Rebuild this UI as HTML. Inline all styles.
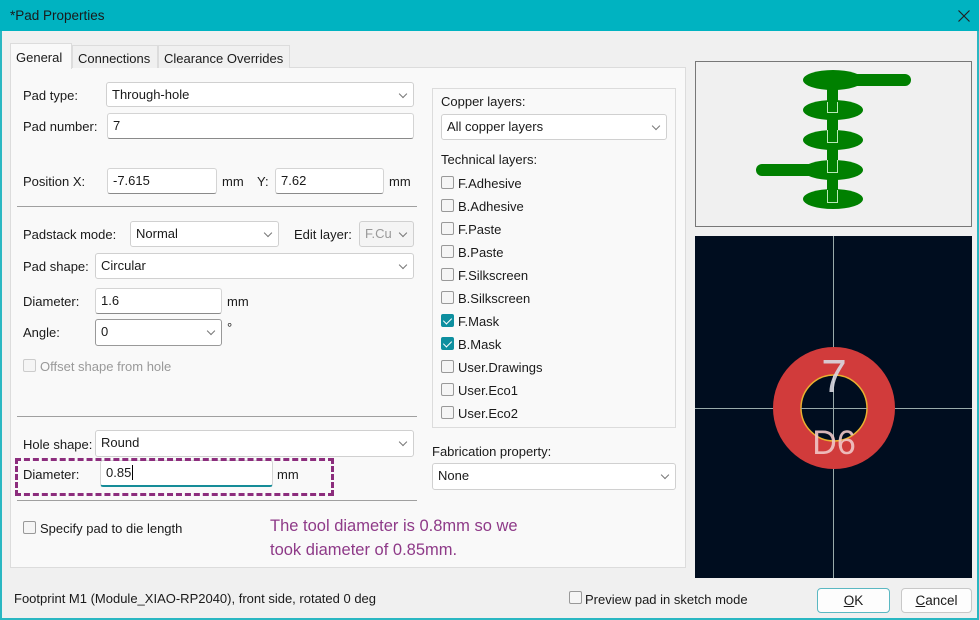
<!DOCTYPE html>
<html><head><meta charset="utf-8"><style>
*{box-sizing:border-box;margin:0;padding:0}
body{width:979px;height:620px;overflow:hidden;background:#f0f0f0;font-family:"Liberation Sans",sans-serif;font-size:13px;color:#1a1a1a;position:relative}
.a{position:absolute;white-space:nowrap}
.tb{left:0;top:0;width:979px;height:31px;background:#00b3c1}
.frame{left:0;top:31px;width:979px;height:589px;border:2px solid #2ab7c2;border-top:none}
.panel{left:10px;top:67px;width:676px;height:501px;background:#f9f9f9;border:1px solid #dcdcdc}
.in{position:absolute;background:#fff;border:1px solid #d4d4d4;border-bottom:1px solid #8a8a8a;border-radius:3px;padding-left:5px;line-height:24px;font-size:13px;white-space:nowrap}
.sel{position:absolute;background:#fff;border:1px solid #d0d0d0;border-radius:3px;padding-left:5px;line-height:24px;font-size:13px;white-space:nowrap}
.sel:after{content:"";position:absolute;right:7px;top:8px;width:5px;height:5px;border-right:1px solid #777;border-bottom:1px solid #777;transform:rotate(45deg)}
.cb{position:absolute;width:13px;height:13px;border:1px solid #999;background:#f5f5f5;border-radius:2px}
.ck{background:#0d8f9f;border-color:#0d8f9f}
.ck:after{content:"";position:absolute;left:3px;top:1px;width:4px;height:7px;border-right:1.5px solid #fff;border-bottom:1.5px solid #fff;transform:rotate(45deg)}
.hr{position:absolute;height:1px;background:#a0a0a0}
.tab{position:absolute;top:45px;height:23px;background:#f0f0f0;border:1px solid #dcdcdc;border-bottom:none;padding:5px 0 0 5px;font-size:13px;white-space:nowrap;overflow:hidden}
.btn{position:absolute;height:25px;background:#fdfdfd;border:1px solid #c8c8c8;border-radius:4px;text-align:center;line-height:23px;font-size:13.5px}
</style></head><body>
<div class="a tb"></div>
<div class="a" style="left:10px;top:8px;color:#1a1a1a;font-size:13.5px">*Pad Properties</div>
<svg class="a" style="left:958px;top:10px" width="12" height="12"><path d="M0.5 0.5L11.5 11.5M11.5 0.5L0.5 11.5" stroke="#222" stroke-width="1.2"/></svg>
<div class="a frame"></div>
<div class="a panel"></div>
<div class="tab" style="left:10px;top:43px;height:26px;width:62px;background:#f9f9f9;padding-top:6px">General</div>
<div class="tab" style="left:72px;width:86px">Connections</div>
<div class="tab" style="left:158px;width:132px">Clearance Overrides</div>

<div class="a" style="left:23px;top:88px">Pad type:</div>
<div class="sel" style="left:106px;top:82px;width:308px;height:25px">Through-hole</div>
<div class="a" style="left:23px;top:119px">Pad number:</div>
<div class="in" style="left:107px;top:113px;width:307px;height:26px">7</div>
<div class="a" style="left:23px;top:174px">Position X:</div>
<div class="in" style="left:107px;top:168px;width:110px;height:26px">-7.615</div>
<div class="a" style="left:222px;top:174px">mm</div>
<div class="a" style="left:257px;top:174px">Y:</div>
<div class="in" style="left:275px;top:168px;width:109px;height:26px">7.62</div>
<div class="a" style="left:389px;top:174px">mm</div>
<div class="hr" style="left:17px;top:206px;width:400px"></div>

<div class="a" style="left:23px;top:227px">Padstack mode:</div>
<div class="sel" style="left:130px;top:221px;width:149px;height:26px">Normal</div>
<div class="a" style="left:294px;top:227px">Edit layer:</div>
<div class="sel" style="left:359px;top:221px;width:55px;height:26px;color:#999;background:#f4f4f4">F.Cu</div>
<div class="a" style="left:23px;top:259px">Pad shape:</div>
<div class="sel" style="left:95px;top:253px;width:319px;height:26px">Circular</div>
<div class="a" style="left:23px;top:294px">Diameter:</div>
<div class="in" style="left:95px;top:288px;width:127px;height:26px">1.6</div>
<div class="a" style="left:227px;top:294px">mm</div>
<div class="a" style="left:23px;top:325px">Angle:</div>
<div class="sel" style="left:95px;top:319px;width:127px;height:27px;border-color:#999">0</div>
<div class="a" style="left:227px;top:320px">°</div>
<div class="cb" style="left:23px;top:359px;border-color:#ccc"></div>
<div class="a" style="left:40px;top:359px;color:#999">Offset shape from hole</div>
<div class="hr" style="left:17px;top:416px;width:400px"></div>

<div class="a" style="left:23px;top:437px">Hole shape:</div>
<div class="sel" style="left:95px;top:430px;width:319px;height:27px">Round</div>
<div class="a" style="left:23px;top:467px">Diameter:</div>
<div class="in" style="left:100px;top:460px;width:173px;height:27px;border-bottom:2px solid #168c98">0.85<span style="border-left:1px solid #000;margin-left:1px"></span></div>
<div class="a" style="left:277px;top:467px">mm</div>
<div class="a" style="left:15px;top:458px;width:319px;height:38px;border:3px dashed #8c2d7d"></div>
<div class="hr" style="left:17px;top:500px;width:400px"></div>
<div class="cb" style="left:23px;top:521px"></div>
<div class="a" style="left:40px;top:521px">Specify pad to die length</div>
<div class="a" style="left:270px;top:514px;color:#8e3a88;font-size:16.5px;line-height:24px">The tool diameter is 0.8mm so we<br>took diameter of 0.85mm.</div>

<div class="a" style="left:432px;top:88px;width:244px;height:340px;border:1px solid #dcdcdc"></div>
<div class="a" style="left:441px;top:94px">Copper layers:</div>
<div class="sel" style="left:441px;top:114px;width:226px;height:26px">All copper layers</div>
<div class="a" style="left:441px;top:152px">Technical layers:</div>
<div class="cb" style="left:441px;top:176px"></div><div class="a" style="left:458px;top:176px">F.Adhesive</div>
<div class="cb" style="left:441px;top:199px"></div><div class="a" style="left:458px;top:199px">B.Adhesive</div>
<div class="cb" style="left:441px;top:222px"></div><div class="a" style="left:458px;top:222px">F.Paste</div>
<div class="cb" style="left:441px;top:245px"></div><div class="a" style="left:458px;top:245px">B.Paste</div>
<div class="cb" style="left:441px;top:268px"></div><div class="a" style="left:458px;top:268px">F.Silkscreen</div>
<div class="cb" style="left:441px;top:291px"></div><div class="a" style="left:458px;top:291px">B.Silkscreen</div>
<div class="cb ck" style="left:441px;top:314px"></div><div class="a" style="left:458px;top:314px">F.Mask</div>
<div class="cb ck" style="left:441px;top:337px"></div><div class="a" style="left:458px;top:337px">B.Mask</div>
<div class="cb" style="left:441px;top:360px"></div><div class="a" style="left:458px;top:360px">User.Drawings</div>
<div class="cb" style="left:441px;top:383px"></div><div class="a" style="left:458px;top:383px">User.Eco1</div>
<div class="cb" style="left:441px;top:406px"></div><div class="a" style="left:458px;top:406px">User.Eco2</div>
<div class="a" style="left:432px;top:444px">Fabrication property:</div>
<div class="sel" style="left:432px;top:463px;width:244px;height:27px">None</div>

<svg class="a" style="left:695px;top:61px" width="277" height="166">
<rect x="0.5" y="0.5" width="276" height="165" fill="#f0f0f0" stroke="#777"/>
<g fill="#008000" transform="translate(-695,-61)">
<rect x="833" y="74" width="78" height="12" rx="6"/>
<rect x="756" y="164" width="78" height="12" rx="6"/>
<ellipse cx="833" cy="80" rx="30" ry="10"/>
<ellipse cx="833" cy="110" rx="30" ry="10"/>
<ellipse cx="833" cy="140" rx="30" ry="10"/>
<ellipse cx="833" cy="170" rx="30" ry="10"/>
<ellipse cx="833" cy="199" rx="30" ry="10"/>
<rect x="827" y="88" width="11" height="116"/>
<g fill="none" stroke="#b8e8b8" stroke-width="1"><path d="M827.5 102V112.5H837.5V102M827.5 130V142.5H837.5V130M827.5 160V172.5H837.5V160M827.5 190V202.5H837.5V190"/></g>
</g>
</svg>
<svg class="a" style="left:695px;top:236px" width="277" height="342">
<rect width="277" height="342" fill="#000d1f"/>
<line x1="138.5" y1="0" x2="138.5" y2="342" stroke="#9aa" stroke-width="1"/>
<line x1="0" y1="172.5" x2="277" y2="172.5" stroke="#9aa" stroke-width="1"/>
<circle cx="139" cy="172" r="61" fill="#d13b3b"/>
<circle cx="139" cy="172" r="33" fill="#000d1f" stroke="#e8b030" stroke-width="1.5"/>
<line x1="138.5" y1="139" x2="138.5" y2="205" stroke="#9aa" stroke-width="1"/>
<line x1="106" y1="172.5" x2="172" y2="172.5" stroke="#9aa" stroke-width="1"/>
<text x="139" y="156" text-anchor="middle" font-family="Liberation Sans" font-size="46" fill="#d8d8e0" fill-opacity="0.9">7</text>
<text x="139" y="218" text-anchor="middle" font-family="Liberation Sans" font-size="34" fill="#f0c8c8" fill-opacity="0.9">D6</text>
</svg>

<div class="a" style="left:14px;top:591px">Footprint M1 (Module_XIAO-RP2040), front side, rotated 0 deg</div>
<div class="cb" style="left:569px;top:591px"></div>
<div class="a" style="left:585px;top:592px">Preview pad in sketch mode</div>
<div class="btn" style="left:817px;top:588px;width:73px;border-color:#5bb8c2"><u>O</u>K</div>
<div class="btn" style="left:901px;top:588px;width:71px"><u>C</u>ancel</div>
</body></html>
